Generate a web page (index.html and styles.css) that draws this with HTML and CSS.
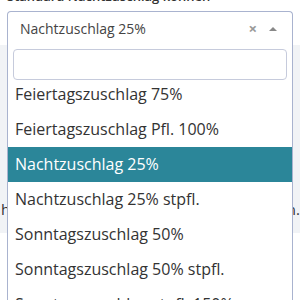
FILE: index.html
```html
<!DOCTYPE html>
<html lang="de">
<head>
  <meta charset="UTF-8" />
  <meta name="viewport" content="width=device-width, initial-scale=1.0"/>
  <title>Zuschlag auswählen</title>
  <link rel="stylesheet" href="styles.css">
</head>
<body>
  <div class="field">
    <label class="label" for="zuschlag">Standard Nachtzuschlag können</label>

    <div class="select-wrap">
      <div class="select">
        <span class="select-value">Nachtzuschlag 25%</span>
        <span class="select-clear">&times;</span>
        <span class="select-arrow"></span>
      </div>

      <div class="dropdown">
        <div class="search-wrap">
          <input class="search" type="text" id="zuschlag" autofocus>
        </div>
        <ul class="results">
          <li class="option">Feiertagszuschlag 75%</li>
          <li class="option">Feiertagszuschlag Pfl. 100%</li>
          <li class="option active">Nachtzuschlag 25%</li>
          <li class="option">Nachtzuschlag 25% stpfl.</li>
          <li class="option">Sonntagszuschlag 50%</li>
          <li class="option">Sonntagszuschlag 50% stpfl.</li>
          <li class="option">Sonntagszuschlag stpfl. 150%</li>
        </ul>
      </div>
    </div>
  </div>

  <div class="behind">
    <div class="behind-line">
      <span>h</span>
      <span>n.</span>
    </div>
  </div>
  <div class="rest"></div>
</body>
</html>
```

FILE: styles.css
```css
html, body {
  min-height: 360px;
}
body {
  margin: 0;
  font-family: "Open Sans", "Noto Sans", sans-serif;
  background: #fff;
  color: #333;
}
.field {
  padding: 0 7px;
}
.label {
  display: block;
  margin-top: -12px;
  font-size: 13px;
  line-height: 16px;
  font-weight: 600;
  color: #333;
  white-space: nowrap;
}
.select-wrap {
  position: relative;
  z-index: 2;
  margin-top: 7px;
}
.select {
  display: flex;
  align-items: center;
  height: 33px;
  padding: 0 15px 0 12px;
  border: 1px solid #a9b3cf;
  border-bottom: none;
  border-radius: 4px 4px 0 0;
  background: #fff;
}
.select-value {
  flex: 1;
  font-size: 14px;
  color: #444;
}
.select-clear {
  font-size: 15px;
  font-weight: 700;
  color: #999;
  margin-right: 12px;
  line-height: 1;
}
.select-arrow {
  width: 0;
  height: 0;
  border-left: 4px solid transparent;
  border-right: 4px solid transparent;
  border-bottom: 4px solid #888;
}
.dropdown {
  position: absolute;
  top: 100%;
  left: 0;
  right: 0;
  border: 1px solid #a9b3cf;
  border-top: none;
  background: #fff;
}
.search-wrap {
  padding: 4px 5px 0;
  margin-bottom: -3px;
}
.search {
  box-sizing: border-box;
  width: 100%;
  height: 31px;
  margin: 0;
  padding: 0 6px;
  border: 1px solid #c6cbdc;
  border-radius: 4px;
  font: inherit;
  font-size: 16px;
  outline: none;
  caret-color: #222;
}
.results {
  list-style: none;
  margin: 0;
  padding: 0;
}
.option {
  height: 35px;
  line-height: 35px;
  padding: 0 7px;
  font-size: 16px;
  color: #333;
  white-space: nowrap;
}
.option.active {
  background: #2b8699;
  color: #fff;
}
.behind {
  height: 188px;
  background: #f1f3f6;
  display: flex;
  align-items: flex-end;
}
.behind-line {
  display: flex;
  justify-content: space-between;
  width: 100%;
  padding: 0 0 14px 1px;
  font-size: 15px;
  color: #333;
}
.rest {
  height: 120px;
}
```
